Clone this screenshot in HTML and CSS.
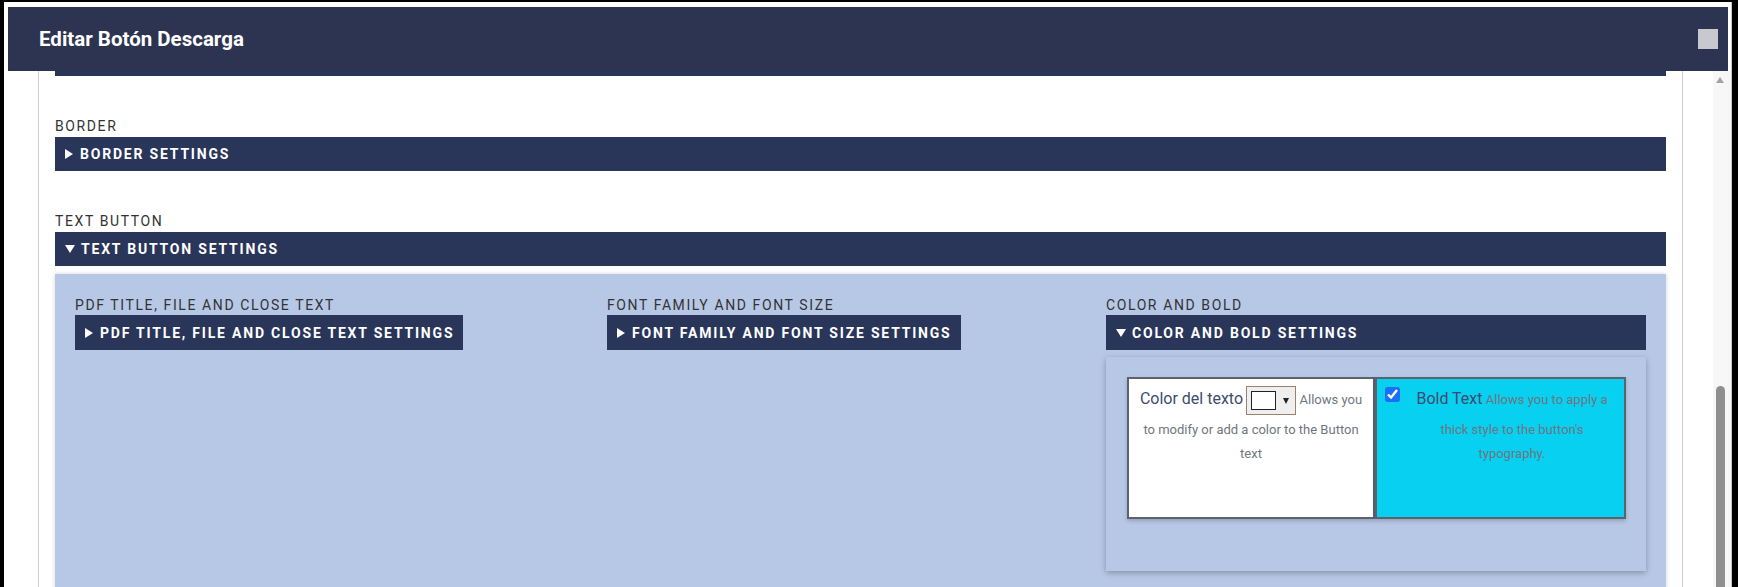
FILE: index.html
```html
<!DOCTYPE html>
<html lang="es">
<head>
<meta charset="utf-8">
<title>Editar Botón Descarga</title>
<link rel="stylesheet" href="styles.css">
</head>
<body>
<div class="modal">
  <header class="modal-header">
    <h1 class="modal-title">Editar Botón Descarga</h1>
    <button class="modal-close" type="button" aria-label="Cerrar"></button>
  </header>
  <div class="modal-body">
    <div class="scroll-frame">
      <div class="bar-tail"></div>

      <section class="group">
        <div class="group-label">Border</div>
        <details class="group-details">
          <summary class="bar">Border Settings</summary>
        </details>
      </section>

      <section class="group">
        <div class="group-label">Text Button</div>
        <details class="group-details" open>
          <summary class="bar">Text Button Settings</summary>
          <div class="panel">
            <div class="sub">
              <div class="sub-label">PDF Title, File and Close Text</div>
              <details class="sub-details">
                <summary class="bar bar-sub bar-fit">PDF Title, File and Close Text Settings</summary>
              </details>
            </div>
            <div class="sub">
              <div class="sub-label">Font Family and Font Size</div>
              <details class="sub-details">
                <summary class="bar bar-sub bar-fit">Font Family and Font Size Settings</summary>
              </details>
            </div>
            <div class="sub">
              <div class="sub-label">Color and Bold</div>
              <details class="sub-details" open>
                <summary class="bar bar-sub">Color and Bold Settings</summary>
                <div class="card">
                  <div class="options">
                    <div class="opt opt-color">
                      <p class="opt-text"><span class="opt-title">Color del texto</span> <span class="color-input" role="button" aria-label="Color"><span class="swatch"></span><span class="caret"></span></span> <span class="opt-desc">Allows you to modify or add a color to the Button text</span></p>
                    </div>
                    <div class="opt opt-bold">
                      <input class="opt-check" type="checkbox" checked aria-label="Bold Text">
                      <p class="opt-text opt-text-bold"><span class="opt-title">Bold Text</span> <span class="opt-desc">Allows you to apply a thick style to the button's typography.</span></p>
                    </div>
                  </div>
                </div>
              </details>
            </div>
          </div>
        </details>
      </section>
    </div>
    <div class="scrollbar" aria-hidden="true">
      <div class="sb-arrow"></div>
      <div class="sb-thumb"></div>
    </div>
  </div>
</div>
</body>
</html>
```

FILE: styles.css
```css
* { box-sizing: border-box; }

html, body {
  margin: 0;
  padding: 0;
}

body {
  background: #000;
  font-family: Roboto, "Liberation Sans", Arial, sans-serif;
  height: 587px;
  overflow: hidden;
}

.modal {
  margin: 2px 6px 0 4px;
  height: 585px;
  background: #fff;
  border-right: 1px solid #c9c9c9;
  display: flex;
  flex-direction: column;
  overflow: hidden;
}

.modal-header {
  flex: 0 0 64px;
  margin: 5px 3px 0 4px;
  background: #2d3452;
  display: flex;
  align-items: center;
  justify-content: space-between;
  padding: 0 10px 0 31px;
}

.modal-title {
  margin: 0;
  color: #fff;
  font-size: 20.5px;
  font-weight: 700;
  line-height: 1;
}

.modal-close {
  width: 20px;
  height: 20px;
  padding: 0;
  border: 0;
  background: #c8c9cf;
}

.modal-body {
  flex: 1;
  min-height: 0;
  display: flex;
  padding-left: 34px;
}

.scroll-frame {
  width: 1645px;
  border-left: 1px solid #cfcfcf;
  border-right: 1px solid #cfcfcf;
  padding: 0 16px;
  overflow: hidden;
}

.scrollbar {
  margin-left: auto;
  width: 18px;
  background: #f7f7f7;
  padding: 6px 0 0 3px;
  display: flex;
  flex-direction: column;
}

.sb-arrow {
  width: 0;
  height: 0;
  border-left: 4.5px solid transparent;
  border-right: 4.5px solid transparent;
  border-bottom: 6px solid #a3a3a3;
}

.sb-thumb {
  margin-top: 303px;
  width: 9px;
  flex: 1;
  background: #8f8f8f;
  border-radius: 5px 5px 0 0;
}

.bar-tail {
  height: 5px;
  background: #29365a;
}

.group {
  margin-top: 42px;
}

.group-label,
.sub-label {
  font-size: 14px;
  line-height: 16px;
  letter-spacing: 1.6px;
  text-transform: uppercase;
  color: #333;
}

.group-label {
  margin-bottom: 3px;
}

.sub-label {
  margin-bottom: 2px;
}

.bar {
  list-style: none;
  display: flex;
  align-items: center;
  height: 34px;
  padding: 0 9px 0 10px;
  background: #29365a;
  color: #fff;
  font-size: 14px;
  font-weight: 700;
  letter-spacing: 1.8px;
  text-transform: uppercase;
  cursor: pointer;
  white-space: nowrap;
}

.bar::-webkit-details-marker {
  display: none;
}

.bar::before {
  content: "";
  flex: 0 0 auto;
  width: 0;
  height: 0;
  margin-right: 7px;
  border-top: 5px solid transparent;
  border-bottom: 5px solid transparent;
  border-left: 8px solid #fff;
}

details[open] > .bar::before {
  border-left: 5px solid transparent;
  border-right: 5px solid transparent;
  border-top: 8px solid #fff;
  border-bottom: 0;
  margin-right: 6px;
}

.bar-sub {
  height: 35px;
}

.bar-fit {
  display: inline-flex;
}

.panel {
  margin-top: 8px;
  background: #b7c8e6;
  box-shadow: 0 0 4px rgba(0, 0, 0, 0.18);
  padding: 23px 20px 0;
  height: 330px;
  display: grid;
  grid-template-columns: 532px 499px 540px;
  align-items: start;
}

.card {
  margin-top: 7px;
  background: #b7c8e6;
  box-shadow: 0 2px 6px rgba(0, 0, 0, 0.28);
  padding: 20px 20px 52px 21px;
}

.options {
  display: flex;
}

.opt {
  height: 142px;
  border: 2px solid #5e626d;
  box-shadow: 0 2px 4px rgba(0, 0, 0, 0.2);
}

.opt-color {
  flex: 0 0 248px;
  background: #fff;
  padding: 0 8px;
}

.opt-bold {
  flex: 1;
  background: #07d0f0;
  display: flex;
  align-items: flex-start;
}

.opt-text {
  margin: 0;
  font-size: 13px;
  line-height: 24px;
  color: #6c757d;
  text-align: center;
}

.opt-text-bold {
  flex: 1;
  padding: 0 12px;
}

.opt-title {
  font-size: 16px;
  line-height: 39px;
  color: #3e4b6c;
}

.opt-desc {
  color: #6f7680;
}

.opt-check {
  flex: 0 0 15px;
  width: 15px;
  height: 15px;
  margin: 8px 0 0 8px;
  accent-color: #1a6ff2;
}

.color-input {
  display: inline-flex;
  align-items: center;
  vertical-align: middle;
  width: 50px;
  height: 29px;
  padding: 0 4px;
  border: 1px solid #9c8068;
  background: #efefef;
}

.swatch {
  width: 25px;
  height: 19px;
  border: 1px solid #222;
  background: #fff;
}

.caret {
  width: 0;
  height: 0;
  margin-left: 7px;
  border-left: 3.5px solid transparent;
  border-right: 3.5px solid transparent;
  border-top: 6px solid #222;
}
```
